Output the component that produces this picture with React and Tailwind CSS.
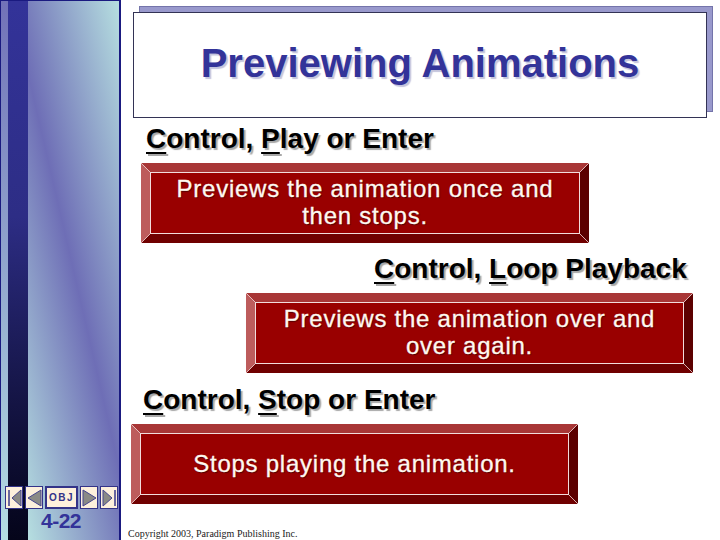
import React from 'react';

const Heading = ({ first, second, rest, className }) => (
  <h2 className={`h-[30px] font-['Liberation_Sans',Arial,sans-serif] text-[28px] leading-[30px] font-bold text-black whitespace-nowrap [text-shadow:2px_2px_1px_#a8a8a8] ${className}`}>
    <u className="underline-offset-[4px]">C</u>ontrol, <u className="underline-offset-[4px]">{first}</u>{second}{rest}
  </h2>
);

const BevelBox = ({ className, children }) => (
  <div className={`relative h-[80px] border-[9px] border-t-[#a83636] border-r-[#5c0000] border-b-[#700000] border-l-[#bd5c5c] ${className}`}>
    <div className="flex h-full flex-col items-center justify-center border border-[#f2dcdc] bg-[#990000] pb-[2px] font-['Liberation_Sans',Arial,sans-serif] text-[24px] leading-[27px] tracking-[0.75px] text-[#fff8f0] [-webkit-text-stroke:0.3px_#fff8f0] [text-shadow:1px_1px_1px_#500000]">
      {children}
    </div>
    {/* light mitre lines at the corners */}
    <svg className="absolute -top-[9px] -left-[9px] h-[9px] w-[9px]" viewBox="0 0 9 9"><path d="M0 0L9 9" stroke="#f2dcdc" strokeWidth="0.8" /></svg>
    <svg className="absolute -bottom-[9px] -left-[9px] h-[9px] w-[9px]" viewBox="0 0 9 9"><path d="M0 9L9 0" stroke="#f2dcdc" strokeWidth="0.8" /></svg>
    <svg className="absolute -top-[9px] -right-[9px] h-[9px] w-[9px]" viewBox="0 0 9 9"><path d="M0 9L9 0" stroke="#f2dcdc" strokeWidth="0.8" /></svg>
    <svg className="absolute -right-[9px] -bottom-[9px] h-[9px] w-[9px]" viewBox="0 0 9 9"><path d="M0 0L9 9" stroke="#f2dcdc" strokeWidth="0.8" /></svg>
  </div>
);

const NavButton = ({ path, bar }) => (
  <div className="flex h-[23px] w-[18px] items-center justify-center border-[1.5px] border-[#333388] bg-[#fdf0dc]">
    <svg width="15" height="18" viewBox="0 0 15 18">
      <path d={path} fill="#8a8a86" stroke="#44448f" strokeWidth="1" />
      {bar && <path d={bar} stroke="#44448f" strokeWidth="1.6" />}
    </svg>
  </div>
);

const Sidebar = () => (
  <aside className="relative flex h-full w-[121px] shrink-0 border-t border-r-2 border-l border-[#1a1a80]">
    <div className="w-[7px] bg-gradient-to-b from-[#7272b8] to-[#b4dde2]" />
    <div className="w-[20px] bg-gradient-to-b from-[#333399] via-[#2d2d85] via-40% to-[#05051a]" />
    <div className="flex-1 bg-[linear-gradient(77deg,#b6dfe0_0%,#6e6eb6_50%,#b6dfe0_100%)]" />

    {/* slide navigation sits over the stripes */}
    <div className="absolute top-[485px] left-[4px] flex items-center gap-[2px]">
      <NavButton path="M14 1L5 9L14 17Z" bar="M2 1V17" />
      <NavButton path="M14 1L1 9L14 17Z" />
      <div className="flex h-[23px] w-[33px] items-center justify-center border-2 border-[#333388] bg-[#fdf0dc] font-['Liberation_Sans',Arial,sans-serif] text-[10px] font-bold tracking-[1.5px] text-[#333388]">
        OBJ
      </div>
      <NavButton path="M1 1L14 9L1 17Z" />
      <NavButton path="M1 1L10 9L1 17Z" bar="M13 1V17" />
    </div>
    <div className="absolute top-[508px] left-[40px] font-['Liberation_Sans',Arial,sans-serif] text-[21px] leading-[24px] font-bold tracking-[-0.5px] text-[#333399]">
      4-22
    </div>
  </aside>
);

export default function App() {
  return (
    <div className="flex h-[540px] w-[720px] overflow-hidden bg-white">
      <Sidebar />
      <main className="flex min-w-0 flex-1 flex-col">
        {/* title card with its offset backing */}
        <div className="relative mt-[12px] ml-[12px] h-[106px] w-[574px]">
          <div className="absolute -top-[6px] -right-[6px] h-full w-full border border-[#7474aa] bg-[#9999cc]" />
          <div className="relative flex h-full items-center justify-center border border-[#333355] bg-white pb-[4px] font-['Liberation_Sans',Arial,sans-serif] text-[40px] font-bold text-[#333399] [text-shadow:2px_2px_1px_#c4c4dc]">
            Previewing Animations
          </div>
        </div>

        <Heading first="P" second="lay" rest=" or Enter" className="mt-[6px] ml-[25px]" />
        <BevelBox className="mt-[9px] ml-[20px] w-[448px]">
          <p>Previews the animation once and</p>
          <p>then stops.</p>
        </BevelBox>

        <Heading first="L" second="oop" rest=" Playback" className="mt-[11px] ml-[253px]" />
        <BevelBox className="mt-[9px] ml-[125px] w-[447px]">
          <p>Previews the animation over and</p>
          <p>over again.</p>
        </BevelBox>

        <Heading first="S" second="top" rest=" or Enter" className="mt-[12px] ml-[22px]" />
        <BevelBox className="mt-[9px] ml-[10px] w-[447px]">
          <p>Stops playing the animation.</p>
        </BevelBox>

        <p className="mt-[24px] ml-[7px] font-['Liberation_Serif','Times_New_Roman',serif] text-[10px] leading-[12px] text-[#222]">
          Copyright 2003, Paradigm Publishing Inc.
        </p>
      </main>
    </div>
  );
}
